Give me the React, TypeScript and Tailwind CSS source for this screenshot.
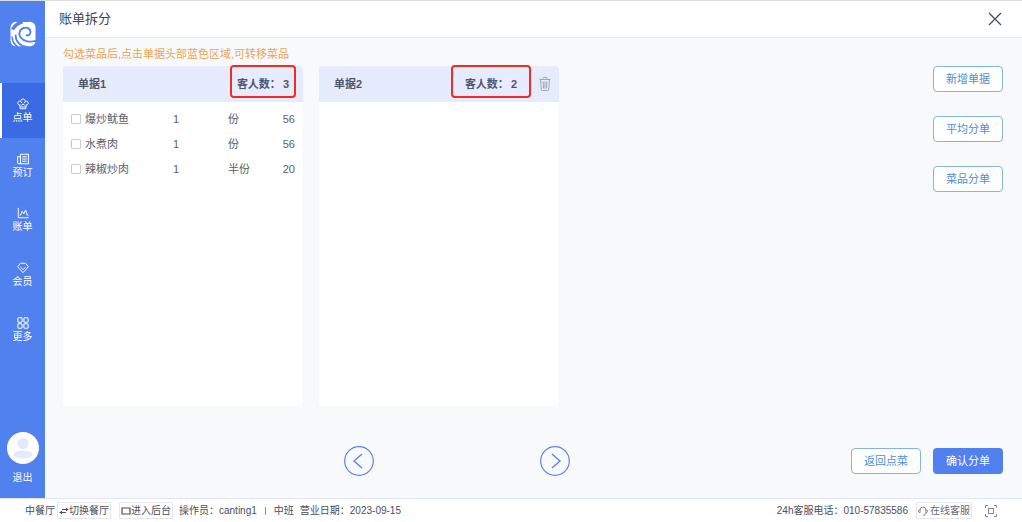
import React, { useState } from "react";

type Dish = { name: string; qty: number; unit: string; price: number };

const dishes: Dish[] = [
  { name: "爆炒鱿鱼", qty: 1, unit: "份", price: 56 },
  { name: "水煮肉", qty: 1, unit: "份", price: 56 },
  { name: "辣椒炒肉", qty: 1, unit: "半份", price: 20 },
];

function Logo() {
  return (
    <svg viewBox="0 0 26 26" className="size-[26px]" fill="none" stroke="#5180ef" aria-hidden="true">
      <rect x=".5" y=".8" width="25" height="24.500" rx="5.500" fill="#fff" stroke="none" />
      <path d="M2.500 8.500C4.500 5 8 2 12.500.8" strokeWidth="3.400" />
      <path d="M6.500 0h13" strokeWidth="2" />
      <path d="M27 19.500c-7 2.400-13.500.8-16.300-3C8.200 13 9.500 8.300 13.500 7c3.800-1.200 7 1 7 4 0 2.500-2.400 4-4.700 3.200" strokeWidth="1.900" />
      <path d="M17.500 26c-7.500-.8-12.300-5.500-11.800-12.500" strokeWidth="1.700" />
      <path d="M8 26C4 23.500 2 20 2.300 15.500" strokeWidth="1.500" />
    </svg>
  );
}

const iconClass = "h-3 w-3";

function ChefIcon() {
  return (
    <svg viewBox="0 0 14 14" className={iconClass} fill="none" stroke="currentColor" strokeWidth="1.100" aria-hidden="true">
      <path d="M3.300 8.500C.9 8.100.3 5.800 1.400 4.500c.8-1 2.100-1.100 2.900-.5C4.400 2.200 5.500 1.200 7 1.200S9.600 2.200 9.700 4c.8-.6 2.100-.5 2.900.5 1.100 1.300.5 3.600-1.900 4M3.300 7.500l.4 5h6.600l.4-5M4.300 4l1.400 2M9.700 4 8.300 6M5 8.500l2-1.500 2 1.500M3.700 10.500h6.600" />
    </svg>
  );
}

function NewsIcon() {
  return (
    <svg viewBox="0 0 14 14" className={iconClass} fill="none" stroke="currentColor" strokeWidth="1.200" aria-hidden="true">
      <path d="M4 1.500h9.300v11H2.500C1.300 12.500.7 12 .7 11V4.500H4M4 1.500V11c0 1-.6 1.500-1.500 1.500M6 4.500h5.500M6 7h5.500M6 9.500h5.500" />
    </svg>
  );
}

function ChartIcon() {
  return (
    <svg viewBox="0 0 14 14" className={iconClass} fill="none" stroke="currentColor" strokeWidth="1.100" aria-hidden="true">
      <path d="M1.500 1v11.500H13.500M3 9.500h1l2-4.500 2 3 2-4.500 2 6h1.500" />
    </svg>
  );
}

function GemIcon() {
  return (
    <svg viewBox="0 0 14 14" className={iconClass} fill="none" stroke="currentColor" strokeWidth="1.100" strokeLinejoin="round" aria-hidden="true">
      <path d="M4 1.500h6L13.300 5.500 7 12.500.7 5.500ZM4 6l3 3 3-3" />
    </svg>
  );
}

function GridIcon() {
  return (
    <svg viewBox="0 0 14 14" className={iconClass} fill="none" stroke="currentColor" strokeWidth="1.200" aria-hidden="true">
      <rect x="1" y="1" width="5" height="5" rx="1.200" />
      <rect x="8" y="1" width="5" height="5" rx="1.200" />
      <rect x="1" y="8" width="5" height="5" rx="1.200" />
      <rect x="8" y="8" width="5" height="5" rx="1.200" />
    </svg>
  );
}

function TrashIcon() {
  return (
    <svg viewBox="0 0 12 16" className="h-4 w-3" fill="none" stroke="#a3a6ae" strokeWidth="1" aria-hidden="true">
      <path d="M.5 3.500h11M3.800 3.500V2.200c0-.5.3-.7.700-.7h3c.4 0 .7.200.7.700v1.300M1.500 3.500l.8 10.200c.1.600.4.800.9.800h5.600c.5 0 .8-.2.900-.8l.8-10.200M4.200 5.500l.3 7M6 5.500v7M7.800 5.500l-.3 7" />
    </svg>
  );
}

const navItems = [
  { label: "点单", icon: <ChefIcon /> },
  { label: "预订", icon: <NewsIcon /> },
  { label: "账单", icon: <ChartIcon /> },
  { label: "会员", icon: <GemIcon /> },
  { label: "更多", icon: <GridIcon /> },
];

function Sidebar() {
  return (
    <aside className="flex w-[45px] shrink-0 flex-col bg-[#5180ef] text-[10px] leading-4 text-white">
      <div className="flex h-[82px] justify-center pt-5">
        <Logo />
      </div>
      <nav className="grid h-[273px] grid-rows-5">
        {navItems.map((item, i) => (
          <a
            key={item.label}
            href="#"
            className={
              i === 0
                ? "flex flex-col items-center justify-center border-l-2 border-white bg-[#3a6be3] pt-1 pr-0.5"
                : "flex flex-col items-center justify-center pt-1"
            }
          >
            {item.icon}
            <span>{item.label}</span>
          </a>
        ))}
      </nav>
      <button type="button" className="mt-auto flex flex-col items-center gap-1.5 pb-3">
        <svg viewBox="0 0 32 32" className="size-8" aria-hidden="true">
          <circle cx="16" cy="16" r="16" fill="#fff" />
          <circle cx="16" cy="11.500" r="5.500" fill="#e4e9fb" />
          <ellipse cx="16" cy="22.500" rx="9.500" ry="4" fill="#e4e9fb" />
        </svg>
        <span>退出</span>
      </button>
    </aside>
  );
}

type BillProps = {
  title: string;
  guests: number;
  wide?: boolean;
  rows?: Dish[];
};

function Bill({ title, guests, wide = false, rows = [] }: BillProps) {
  return (
    <section className="flex w-60 flex-col rounded bg-white">
      <header className="flex h-9 items-center rounded-t bg-[#e7ebfe] pl-[15px] font-bold text-[#50566a]">
        <h2>{title}</h2>
        <div className={wide ? "relative ml-auto mr-[22px] flex gap-0.5" : "relative ml-auto mr-[14px] flex gap-0.5"}>
          <span>客人数：</span>
          <span>{guests}</span>
          <span
            className={
              wide
                ? "pointer-events-none absolute -inset-x-[14px] -top-[11px] -bottom-[6px] rounded-sm border-2 border-[#f52a20]"
                : "pointer-events-none absolute -inset-x-[7px] -top-[11px] -bottom-[6px] rounded-sm border-2 border-[#f52a20]"
            }
          />
        </div>
        {wide && (
          <button type="button" aria-label="删除单据" className="mr-2">
            <TrashIcon />
          </button>
        )}
      </header>
      {rows.length > 0 && (
        <table className="mt-1 w-full table-fixed text-left text-[#5c6068]">
          <colgroup>
            <col className="w-[110px]" />
            <col className="w-[55px]" />
            <col />
            <col />
          </colgroup>
          <tbody>
            {rows.map((d) => (
              <tr key={d.name} className="h-[25px]">
                <td className="pl-2">
                  <label className="flex items-center gap-1">
                    <input
                      type="checkbox"
                      className="size-2.5 appearance-none rounded-[1px] border border-[#c9ccd3] bg-white checked:bg-[#5180ef]"
                    />
                    {d.name}
                  </label>
                </td>
                <td>{d.qty}</td>
                <td>{d.unit}</td>
                <td className="pr-2 text-right">{d.price}</td>
              </tr>
            ))}
          </tbody>
        </table>
      )}
    </section>
  );
}

function OutlineButton({ children }: { children: React.ReactNode }) {
  return (
    <button type="button" className="h-[26px] w-[70px] rounded border border-[#83b4e4] bg-white text-[#4b8ddb]">
      {children}
    </button>
  );
}

function PageArrow({ next = false }: { next?: boolean }) {
  return (
    <button type="button" aria-label={next ? "下一页" : "上一页"} className="size-[30px]">
      <svg viewBox="0 0 30 30" className="size-full" fill="none" stroke="#5b85f0" aria-hidden="true">
        <circle cx="15" cy="15" r="14.300" strokeWidth="1.200" />
        <path d={next ? "M12 8l8 7-8 7" : "M18 8l-8 7 8 7"} strokeWidth="1.400" />
      </svg>
    </button>
  );
}

function StatusBar() {
  const box = "flex h-[17px] items-center rounded-[1px] border border-[#e6e7ec] px-px";
  return (
    <footer className="flex h-6 shrink-0 items-center border-t border-[#dfe4fa] bg-white pl-[25px] pr-6 text-[10px] leading-4 whitespace-nowrap text-[#4a4e5e]">
      <span>中餐厅</span>
      <button type="button" className={`${box} ml-0.5`}>
        <svg viewBox="0 0 10 8" className="h-2 w-2.5" fill="none" stroke="currentColor" aria-hidden="true">
          <path d="M3 2.500H8M2 5.500h5" />
          <path d="M7 .8 9.800 2.500 7 4.200ZM3 3.800.2 5.500 3 7.200Z" fill="currentColor" stroke="none" />
        </svg>
        切换餐厅
      </button>
      <button type="button" className={`${box} ml-2`}>
        <svg viewBox="0 0 10 8" className="h-2 w-2.5" fill="none" stroke="currentColor" strokeWidth="1.200" aria-hidden="true">
          <path d="M3 7H1V1h8v6H7M2.500 7h5" />
        </svg>
        进入后台
      </button>
      <span className="ml-1.5">操作员：canting1</span>
      <span className="ml-2 h-2 w-px bg-[#8a8d99]" />
      <span className="ml-2">中班</span>
      <span className="ml-1.5">营业日期：2023-09-15</span>
      <span className="ml-auto">24h客服电话：010-57835586</span>
      <a href="#" className={`${box} ml-2 text-[#666a78]`}>
        <svg viewBox="0 0 12 12" className="mr-0.5 size-2.5" fill="none" stroke="currentColor" aria-hidden="true">
          <path d="M2.500 8V5a3.500 3.800 0 0 1 7 0v3M2.500 4.500C1 4.500.6 5.200.6 6.200S1 8 2.500 8M9.500 4.500c1.500 0 1.900.7 1.900 1.700S11 8 9.500 8c0 2-1.300 3-3.500 3" />
        </svg>
        在线客服
      </a>
      <button type="button" aria-label="全屏" className="ml-3">
        <svg viewBox="0 0 14 14" className="size-3.5" fill="none" stroke="#8583b5" aria-hidden="true">
          <path d="M1.500 4V1.500H4M10 1.500h2.500V4M12.500 10v2.500H10M4 12.500H1.500V10" />
          <rect x="4.500" y="4.500" width="5" height="5" />
        </svg>
      </button>
    </footer>
  );
}

export default function App() {
  const [open, setOpen] = useState(true);
  return (
    <div className="flex min-h-screen flex-col border-t border-[#dcdde0] bg-[#f7f9fb] font-['Liberation_Sans','Noto_Sans_CJK_SC',sans-serif] text-[11px] leading-4">
      <div className="flex flex-1">
        <Sidebar />
        <main className="flex min-w-0 flex-1 flex-col">
          <header className="flex h-[37px] items-center justify-between border-b border-[#e6eaf5] bg-white pl-[14px] pr-5">
            <h1 className="text-[13px] text-[#3f4357]">账单拆分</h1>
            <button type="button" aria-label="关闭" aria-pressed={!open} onClick={() => setOpen(!open)}>
              <svg viewBox="0 0 14 14" className="size-3.5" fill="none" stroke="#454a66" strokeWidth="1.300" aria-hidden="true">
                <path d="M1 1l12 12M13 1 1 13" />
              </svg>
            </button>
          </header>
          <div className="flex flex-1 flex-col pr-[19px] pb-[22px] pl-[18px]">
            <p className="pt-2 text-[#eca453]">勾选菜品后,点击单据头部蓝色区域,可转移菜品</p>
            <div className="mt-1 flex flex-1 gap-4">
              <Bill title="单据1" guests={3} rows={dishes} />
              <Bill title="单据2" guests={2} wide />
              <div className="ml-auto flex flex-col gap-6">
                <OutlineButton>新增单据</OutlineButton>
                <OutlineButton>平均分单</OutlineButton>
                <OutlineButton>菜品分单</OutlineButton>
              </div>
            </div>
            <div className="mt-10 flex items-center">
              <div className="flex flex-1 justify-center gap-[166px]">
                <PageArrow />
                <PageArrow next />
              </div>
              <div className="flex gap-3">
                <OutlineButton>返回点菜</OutlineButton>
                <button type="button" className="h-[26px] w-[70px] rounded bg-[#5180ef] text-white">
                  确认分单
                </button>
              </div>
            </div>
          </div>
        </main>
      </div>
      <StatusBar />
    </div>
  );
}
